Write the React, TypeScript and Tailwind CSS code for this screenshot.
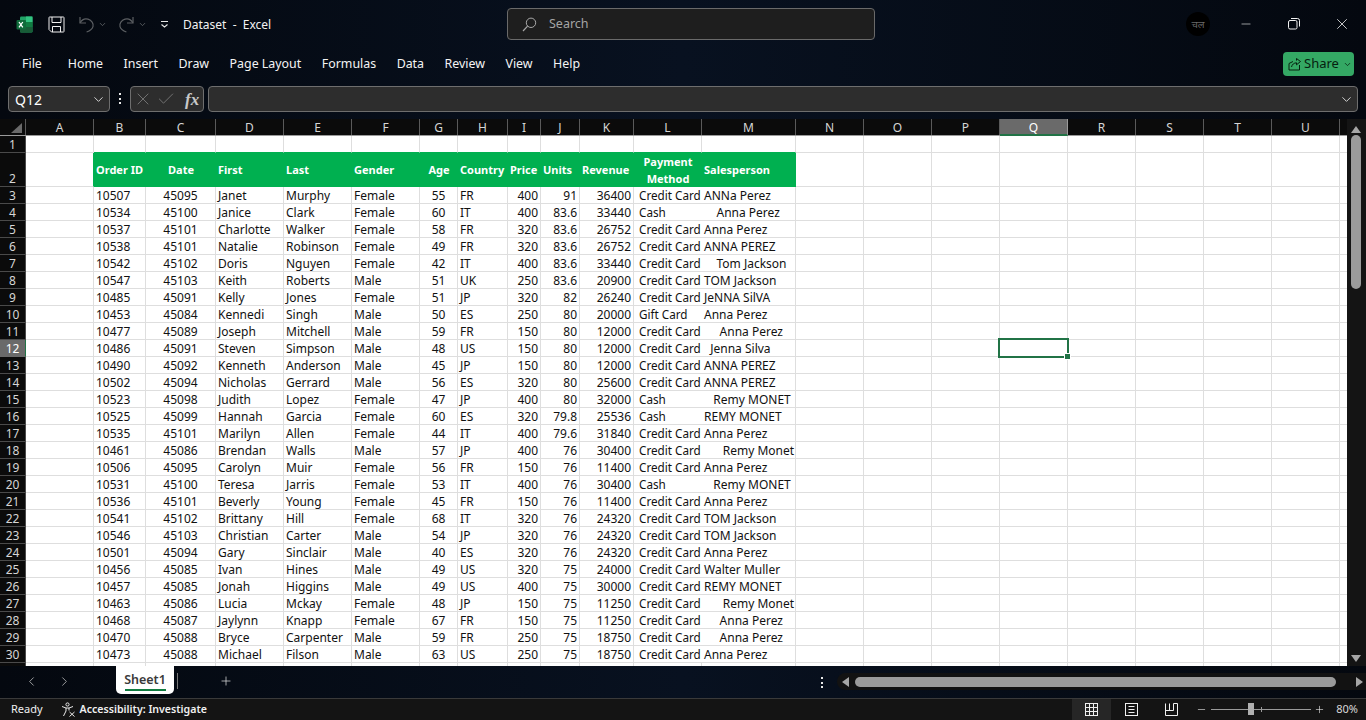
import React from "react";
import { ChevronDown, ChevronLeft, ChevronRight, Plus, Minus, X, Check } from "lucide-react";

const COLS = "grid grid-cols-[26px_68px_52px_70px_68px_68px_68px_38px_50px_33px_39px_54px_68px_94px_68px_68px_68px_68px_68px_68px_68px_68px_8px]";
const LETTERS = ["A","B","C","D","E","F","G","H","I","J","K","L","M","N","O","P","Q","R","S","T","U"];
const CC = "Credit Card";

const DATA: string[][] = [
  ["10507","45095","Janet","Murphy","Female","55","FR","400","91","36400",CC,"ANNa Perez"],
  ["10534","45100","Janice","Clark","Female","60","IT","400","83.6","33440","Cash","    Anna Perez"],
  ["10537","45101","Charlotte","Walker","Female","58","FR","320","83.6","26752",CC,"Anna Perez"],
  ["10538","45101","Natalie","Robinson","Female","49","FR","320","83.6","26752",CC,"ANNA PEREZ"],
  ["10542","45102","Doris","Nguyen","Female","42","IT","400","83.6","33440",CC,"    Tom Jackson"],
  ["10547","45103","Keith","Roberts","Male","51","UK","250","83.6","20900",CC,"TOM Jackson"],
  ["10485","45091","Kelly","Jones","Female","51","JP","320","82","26240",CC,"JeNNA SilVA"],
  ["10453","45084","Kennedi","Singh","Male","50","ES","250","80","20000","Gift Card","Anna Perez"],
  ["10477","45089","Joseph","Mitchell","Male","59","FR","150","80","12000",CC,"     Anna Perez"],
  ["10486","45091","Steven","Simpson","Male","48","US","150","80","12000",CC,"  Jenna Silva"],
  ["10490","45092","Kenneth","Anderson","Male","45","JP","150","80","12000",CC,"ANNA PEREZ"],
  ["10502","45094","Nicholas","Gerrard","Male","56","ES","320","80","25600",CC,"ANNA PEREZ"],
  ["10523","45098","Judith","Lopez","Female","47","JP","400","80","32000","Cash","   Remy MONET"],
  ["10525","45099","Hannah","Garcia","Female","60","ES","320","79.8","25536","Cash","REMY MONET"],
  ["10535","45101","Marilyn","Allen","Female","44","IT","400","79.6","31840",CC,"Anna Perez"],
  ["10461","45086","Brendan","Walls","Male","57","JP","400","76","30400",CC,"      Remy Monet"],
  ["10506","45095","Carolyn","Muir","Female","56","FR","150","76","11400",CC,"Anna Perez"],
  ["10531","45100","Teresa","Jarris","Female","53","IT","400","76","30400","Cash","   Remy MONET"],
  ["10536","45101","Beverly","Young","Female","45","FR","150","76","11400",CC,"Anna Perez"],
  ["10541","45102","Brittany","Hill","Female","68","IT","320","76","24320",CC,"TOM Jackson"],
  ["10546","45103","Christian","Carter","Male","54","JP","320","76","24320",CC,"TOM Jackson"],
  ["10501","45094","Gary","Sinclair","Male","40","ES","320","76","24320",CC,"Anna Perez"],
  ["10456","45085","Ivan","Hines","Male","49","US","320","75","24000",CC,"Walter Muller"],
  ["10457","45085","Jonah","Higgins","Male","49","US","400","75","30000",CC,"REMY MONET"],
  ["10463","45086","Lucia","Mckay","Female","48","JP","150","75","11250",CC,"      Remy Monet"],
  ["10468","45087","Jaylynn","Knapp","Female","67","FR","150","75","11250",CC,"     Anna Perez"],
  ["10470","45088","Bryce","Carpenter","Male","59","FR","250","75","18750",CC,"     Anna Perez"],
  ["10473","45088","Michael","Filson","Male","63","US","250","75","18750",CC,"Anna Perez"],
];

const ALIGN = [
  "pl-[2px]", "text-center", "pl-[2px]", "pl-[2px]", "pl-[2px]", "text-center", "pl-[2px]",
  "text-right pr-[2px]", "text-right pr-[2px]", "text-right pr-[2px]", "pl-[5px] text-[11.7px]", "pl-[2px]",
];

const HEAD = ["Order ID","Date","First","Last","Gender","Age","Country","Price","Units","Revenue","","Salesperson"];
const HEAD_ALIGN = [
  "pl-[2px]", "text-center", "pl-[2px]", "pl-[2px]", "pl-[2px]", "text-center", "pl-[2px]",
  "pl-[2px]", "pl-[2px]", "pl-[2px]", "", "pl-[2px]",
];

function RowHead({ n, active, tall }: { n?: number; active?: boolean; tall?: boolean }) {
  return (
    <div
      className={`flex ${tall ? "items-end" : "items-center"} justify-center overflow-hidden border-b border-r pt-px text-[12px] leading-[15px] ${
        active
          ? "bg-[#6a6a6a] border-b-[#6a6a6a] border-r-[#217346] text-white"
          : "bg-[#0b0b0b] border-b-[#4a4a4a] border-r-[#4a4a4a] text-[#d6d6d6]"
      }`}
    >
      {n}
    </div>
  );
}

function Blank({ selected }: { selected?: boolean }) {
  return (
    <div className="relative border-b border-r border-[#dedede] bg-white">
      {selected && (
        <div className="absolute -left-[2px] -top-[2px] z-10 h-[20px] w-[71px] border-2 border-[#217346]">
          <div className="absolute -bottom-[3px] -right-[3px] h-[5px] w-[5px] bg-[#217346] outline outline-1 outline-white" />
        </div>
      )}
    </div>
  );
}

function BlankTail({ selected }: { selected?: boolean }) {
  return (
    <>
      {LETTERS.slice(13).map((l) => (
        <Blank key={l} selected={selected && l === "Q"} />
      ))}
      <div className="border-b border-[#dedede] bg-white" />
    </>
  );
}

function ExcelLogo() {
  return (
    <svg width="17" height="17" viewBox="0 0 17 17" className="shrink-0">
      <rect x="4" y="0.5" width="12.5" height="16" rx="1.2" fill="#21a366" />
      <rect x="10" y="0.5" width="6.5" height="5.5" fill="#33c481" />
      <rect x="10" y="6" width="6.5" height="5" fill="#107c41" />
      <rect x="4" y="11" width="12.5" height="5.5" rx="1" fill="#185c37" />
      <rect x="0.5" y="4" width="9.5" height="9.5" rx="1" fill="#0f6b3a" />
      <path d="M3 6l3.8 5.4M6.8 6L3 11.4" stroke="#fff" strokeWidth="1.3" />
    </svg>
  );
}

function SaveIcon() {
  return (
    <svg width="17" height="17" viewBox="0 0 17 17" fill="none" stroke="#f0f0f0" strokeWidth="1">
      <path d="M1.5 1H15.5a.6.6 0 0 1 .5.5V15.5a.6.6 0 0 1-.5.5H3.5L1 13.5V1.5a.6.6 0 0 1 .5-.5Z" />
      <path d="M4 1V6.5H13V1" />
      <path d="M4.5 16V10.5H12.5V16" />
    </svg>
  );
}

function UndoIcon({ flip }: { flip?: boolean }) {
  return (
    <svg width="16" height="17" viewBox="0 0 16 17" fill="none" stroke="#5c5f63" strokeWidth="1.2" className={flip ? "-scale-x-100" : ""}>
      <path d="M1 1V7H7" />
      <path d="M1.2 6.8C3 3.6 6 2.4 9 3.2C12.6 4.2 14.8 7.4 14 10.6C13.4 12.8 11.6 14.6 7.6 16" />
    </svg>
  );
}

function Dots({ className }: { className?: string }) {
  return (
    <div className={`flex shrink-0 flex-col gap-[2.5px] ${className ?? ""}`}>
      <span className="h-[2px] w-[2px] bg-[#e8e8e8]" />
      <span className="h-[2px] w-[2px] bg-[#e8e8e8]" />
      <span className="h-[2px] w-[2px] bg-[#e8e8e8]" />
    </div>
  );
}

function Tri({ dir }: { dir: "up" | "down" | "left" | "right" }) {
  const pts = { up: "5,1 10,8 0,8", down: "0,1 10,1 5,8", left: "8,0 8,10 1,5", right: "1,0 1,10 8,5" }[dir];
  return (
    <svg width={dir === "up" || dir === "down" ? 10 : 9} height={dir === "up" || dir === "down" ? 9 : 10} className="shrink-0">
      <polygon points={pts} fill="#a6a6a6" />
    </svg>
  );
}

export default function App() {
  return (
    <div className="flex h-[720px] w-[1366px] flex-col overflow-hidden bg-[#05090f] font-['Noto_Sans','Open_Sans',sans-serif] text-white">
      <div className="bg-linear-to-r from-[#04080f] via-[#081120] to-[#04080f]">
        {/* Title bar */}
        <div className="flex h-[48px] items-center pl-[16px]">
          <ExcelLogo />
          <div className="ml-[15px] shrink-0"><SaveIcon /></div>
          <div className="ml-[14px] shrink-0"><UndoIcon /></div>
          <ChevronDown size={9} className="ml-[3px] shrink-0 text-[#6a6d70]" />
          <div className="ml-[11px] shrink-0"><UndoIcon flip /></div>
          <ChevronDown size={9} className="ml-[4px] shrink-0 text-[#6a6d70]" />
          <svg width="9" height="9" viewBox="0 0 9 9" className="ml-[13px] shrink-0" stroke="#e6e6e6" fill="none">
            <path d="M1 1.5H8" />
            <path d="M1.5 4.5L4.5 7L7.5 4.5" strokeWidth="1.1" />
          </svg>
          <span className="ml-[14px] w-[92px] shrink-0 whitespace-pre pt-px text-[12px] text-[#f2f2f2]">Dataset  -  Excel</span>
          <div className="ml-[232px] flex h-[32px] w-[368px] shrink-0 items-center rounded-[4px] border border-[#6a6a6a] bg-[#1e1e1e] pl-[14px]">
            <svg width="15" height="15" viewBox="0 0 15 15" fill="none" stroke="#a8a8a8" strokeWidth="1">
              <circle cx="9" cy="5.8" r="4.7" />
              <path d="M5.6 9.2L1 14" strokeWidth="1.2" />
            </svg>
            <span className="ml-[12px] pt-px text-[12.5px] text-[#a5a5a5]">Search</span>
          </div>
          <div className="ml-auto flex items-center pr-[15px]">
            <div className="flex h-[24px] w-[24px] shrink-0 items-center justify-center rounded-full bg-black text-[10px] leading-none text-[#6a6a6a]">
              चल
            </div>
            <Minus size={14} strokeWidth={1} className="ml-[29px] shrink-0 text-white" />
            <svg width="12" height="12" viewBox="0 0 12 12" fill="none" stroke="#f2f2f2" className="ml-[35px] shrink-0">
              <rect x="0.5" y="2.5" width="8.5" height="8.5" rx="1.5" />
              <path d="M3 0.5H9.5A2 2 0 0 1 11.5 2.5V8.5" />
            </svg>
            <X size={18} strokeWidth={1} className="ml-[33px] shrink-0 text-white" />
          </div>
        </div>
        {/* Menu */}
        <div className="flex h-[30px] items-center pl-[22px] pt-[2px] text-[12.4px] text-[#f4f4f4]">
          <span className="mr-[26px]">File</span>
          <div className="flex gap-[20.5px]">
            {["Home","Insert","Draw","Page Layout","Formulas","Data","Review","View","Help"].map((m) => (
              <span key={m}>{m}</span>
            ))}
          </div>
          <div className="ml-auto mr-[12px] flex h-[24px] w-[71px] items-center rounded-[4px] bg-[#34a864] pl-[5px] text-[13px] text-[#06200f]">
            <svg width="13" height="13" viewBox="0 0 13 13" fill="none" stroke="#06200f" strokeWidth="1">
              <path d="M1 5.5V12H11.5V7" />
              <path d="M3.5 9C4 6.5 6 4.8 8.5 4.8V6.8L12.5 3.5L8.5 0.5V2.6" />
              <path d="M1 5.5L5 3.5" />
            </svg>
            <span className="ml-[3px]">Share</span>
            <ChevronDown size={9} strokeWidth={2} className="ml-[4px]" />
          </div>
        </div>
        {/* Formula bar */}
        <div className="flex h-[41px] items-start pl-[8px] pt-[8px]">
          <div className="flex h-[26px] w-[102px] items-center rounded-[4px] border border-[#6e6e6e] bg-[#2d2d2d] pl-[6px] pr-[3px] text-[14px]">
            Q12
            <ChevronDown size={15} strokeWidth={1.5} className="ml-auto text-[#dcdcdc]" />
          </div>
          <Dots className="ml-[9px] mt-[7px]" />
          <div className="ml-[9px] flex h-[26px] w-[74px] items-center rounded-[4px] border border-[#6e6e6e] bg-[#2d2d2d] pl-[2px]">
            <X size={20} strokeWidth={1} className="text-[#808080]" />
            <Check size={20} strokeWidth={1} className="ml-[3px] text-[#808080]" />
            <span className="ml-[9px] font-['Liberation_Serif',serif] text-[17px] font-bold italic leading-none text-[#c8c8c8]">fx</span>
          </div>
          <div className="ml-[4px] flex h-[26px] w-[1150px] items-center justify-end rounded-[4px] border border-[#6e6e6e] bg-[#2d2d2d] pr-[3px]">
            <ChevronDown size={15} strokeWidth={1.5} className="text-[#dcdcdc]" />
          </div>
        </div>
      </div>

      {/* Sheet area */}
      <div className="flex h-[547px] overflow-hidden">
        <div className="w-[1347px] overflow-hidden bg-white text-[12px] leading-[16px] text-[#111]">
          {/* column headers */}
          <div className={`${COLS} h-[17px] grid-rows-[16px] border-b border-[#9a9a9a] bg-[#0b0b0b] text-[12px] leading-[17px] text-[#d6d6d6]`}>
            <div className="relative border-r border-[#5a5a5a]">
              <svg width="14" height="11" className="absolute bottom-[1px] right-[2px]"><polygon points="13,0 13,10 2,10" fill="#6a6a6a" /></svg>
            </div>
            {LETTERS.map((l) => (
              <div
                key={l}
                className={`border-r text-center ${l === "Q" ? "h-[17px] border-b-2 border-r-[#9a9a9a] border-b-[#217346] bg-[#6a6a6a] text-white" : "border-[#5a5a5a]"}`}
              >
                {l}
              </div>
            ))}
            <div />
          </div>
          {/* row 1 */}
          <div className={`${COLS} h-[17px] grid-rows-[17px]`}>
            <RowHead n={1} />
            <div className="border-b border-r border-[#dedede]" />
            {LETTERS.slice(1, 13).map((l) => (
              <div key={l} className="border-b border-r border-b-[#00b050] border-r-[#dedede]" />
            ))}
            <BlankTail />
          </div>
          {/* row 2 */}
          <div className={`${COLS} h-[34px] grid-rows-[34px]`}>
            <RowHead n={2} tall />
            <div className="border-b border-r border-b-[#dedede] border-r-[#00b050]" />
            {HEAD.map((h, i) => (
              <div key={i} className={`flex items-center border-b border-[#00b050] bg-[#00b050] text-[11px] font-bold text-white ${i === 11 ? "border-r" : ""}`}>
                {i === 10 ? (
                  <div className="w-full text-center leading-[17px]">Payment<br />Method</div>
                ) : (
                  <div className={`w-full whitespace-nowrap ${HEAD_ALIGN[i]}`}>{h}</div>
                )}
              </div>
            ))}
            <BlankTail />
          </div>
          {/* data rows */}
          {DATA.map((row, r) => {
            const n = r + 3;
            return (
              <div key={n} className={`${COLS} h-[17px] grid-rows-[17px]`}>
                <RowHead n={n} active={n === 12} />
                <div className="border-b border-r border-[#dedede]" />
                {row.map((v, i) => (
                  <div
                    key={i}
                    className={`h-[17px] whitespace-pre border-b border-[#dedede] pt-px leading-[15px] ${i === 10 ? "overflow-visible" : "border-r"} ${ALIGN[i]}`}
                  >
                    {v}
                  </div>
                ))}
                <BlankTail selected={n === 12} />
              </div>
            );
          })}
          <div className={`${COLS} h-[17px] grid-rows-[17px]`}>
            <RowHead />
            {LETTERS.map((l) => (
              <div key={l} className="border-r border-[#dedede]" />
            ))}
            <div />
          </div>
        </div>
        {/* vertical scrollbar */}
        <div className="flex w-[19px] flex-col items-center bg-[#141414] pr-[2px]">
          <div className="mt-[4px] flex h-[12px] items-center"><Tri dir="up" /></div>
          <div className="h-[154px] w-[10px] rounded-full bg-[#9b9b9b]" />
          <div className="mt-auto mb-[2px] flex h-[12px] items-center"><Tri dir="down" /></div>
        </div>
      </div>

      {/* Sheet tabs */}
      <div className="flex h-[32px] bg-linear-to-r from-[#04080f] via-[#081120] to-[#04080f]">
        <ChevronLeft size={15} strokeWidth={1.2} className="ml-[24px] mt-[8px] text-[#c8c8c8]" />
        <ChevronRight size={15} strokeWidth={1.2} className="ml-[18px] mt-[8px] text-[#c8c8c8]" />
        <div className="ml-[44px] flex h-[28px] w-[58px] flex-col items-center rounded-b-[5px] bg-white pt-[4px] text-[12.5px] font-semibold leading-[20px] text-[#3a3a3a]">
          Sheet1
          <div className="-mt-px h-[2px] w-[41px] bg-[#107c41]" />
        </div>
        <div className="ml-[3px] mt-[7px] h-[16px] w-px bg-[#777]" />
        <Plus size={14} strokeWidth={1.2} className="ml-[41px] mt-[8px] text-[#e6e6e6]" />
        <Dots className="ml-[588px] mt-[11px]" />
        <div className="ml-[14px] mt-[7px] flex h-[17px] flex-1 items-center rounded-l-full bg-[#121212] pl-[4px] pr-[2px]">
          <Tri dir="left" />
          <div className="ml-[5px] h-[10px] w-[481px] rounded-full bg-[#9b9b9b]" />
          <div className="ml-auto"><Tri dir="right" /></div>
        </div>
      </div>

      {/* Status bar */}
      <div className="flex h-[22px] flex-1 items-center border-t border-[#3a3a3a] bg-[#141414] pl-[11px] text-[11px] text-[#f0f0f0]">
        <span>Ready</span>
        <svg width="15" height="15" viewBox="0 0 15 15" fill="none" stroke="#e8e8e8" strokeWidth="1" className="ml-[18px] shrink-0">
          <circle cx="6.5" cy="2.5" r="1.6" />
          <path d="M1 4.5L5 6H8L12 4.5M5 6V9L2.5 14M8 6V8.5" />
          <path d="M8.5 10L13.5 14.5M13.5 10L8.5 14.5" />
        </svg>
        <span className="ml-[4px] whitespace-nowrap text-[10.6px] font-semibold">Accessibility: Investigate</span>
        <div className="ml-auto flex h-full shrink-0 items-center pr-[8px]">
          <div className="flex h-full w-[39px] items-center justify-center bg-[#262626]">
            <svg width="13" height="13" viewBox="0 0 13 13" fill="none" stroke="#f0f0f0" strokeWidth="1">
              <rect x="0.5" y="0.5" width="12" height="12" />
              <path d="M4.5 0.5V12.5M8.5 0.5V12.5M0.5 4.5H12.5M0.5 8.5H12.5" />
            </svg>
          </div>
          <svg width="13" height="13" viewBox="0 0 13 13" fill="none" stroke="#f0f0f0" strokeWidth="1" className="ml-[14px]">
            <rect x="0.5" y="0.5" width="12" height="12" />
            <path d="M3.5 3.5H9.5M3.5 6.5H9.5M3.5 9.5H9.5" />
          </svg>
          <svg width="13" height="13" viewBox="0 0 13 13" fill="none" stroke="#f0f0f0" strokeWidth="1" className="ml-[27px]">
            <path d="M0.5 0.5V12.5H12.5V0.5H8.5V7.5H0.5" />
            <path d="M4.5 0.5V7.5" />
          </svg>
          <Minus size={11} strokeWidth={1.3} className="ml-[18px]" />
          <div className="relative ml-[4px] h-px w-[100px] bg-[#9a9a9a]">
            <div className="absolute -top-[6px] left-[37px] h-[12px] w-[6px] bg-[#b0b0b0]" />
            <div className="absolute -top-[2px] left-[50px] h-[5px] w-px bg-[#9a9a9a]" />
          </div>
          <Plus size={11} strokeWidth={1.3} className="ml-[3px]" />
          <span className="ml-[11px] text-[#d8d8d8]">80%</span>
        </div>
      </div>
    </div>
  );
}
